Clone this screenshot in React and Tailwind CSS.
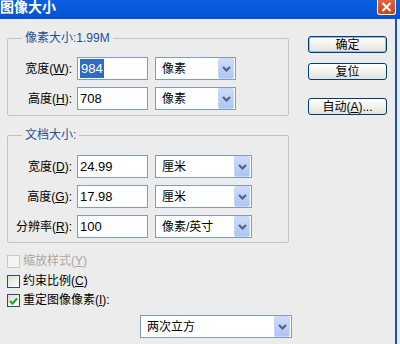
import React from "react";

const FONT = { fontFamily: '"Liberation Sans", "Noto Sans CJK SC", sans-serif' };

function Arrow() {
  return (
    <div className="w-[16px] h-[21px] mr-[1px] rounded-[2px] border border-[#c9d7f7] bg-gradient-to-b from-[#cfdcfb] to-[#aec4f4] flex items-center justify-center">
      <svg width="9" height="6" viewBox="0 0 9 6">
        <path d="M1 1 L4.5 4.5 L8 1" fill="none" stroke="#4d6185" strokeWidth="2" />
      </svg>
    </div>
  );
}

function Select({ w, text }) {
  return (
    <div className={`${w} h-[23px] border border-[#7f9db9] bg-white flex items-center justify-between`}>
      <span className="pl-[6px] text-[12px] text-black">{text}</span>
      <Arrow />
    </div>
  );
}

function Input({ children }) {
  return (
    <div className="w-[71px] h-[23px] border border-[#7f9db9] bg-white flex items-center pl-[2px] text-[13px] text-black">
      {children}
    </div>
  );
}

function Row({ label, value, unit, selW, className = "" }) {
  return (
    <div className={`flex items-center ${className}`}>
      <div className="w-[64px] text-right text-[12px] text-black whitespace-nowrap">{label}</div>
      <div className="ml-[5px]">
        <Input>{value}</Input>
      </div>
      <div className="ml-[7px]">
        <Select w={selW} text={unit} />
      </div>
    </div>
  );
}

function Btn({ children, def, className = "" }) {
  return (
    <div
      className={`w-[79px] h-[17px] rounded-[3px] border border-[#003c74] bg-gradient-to-b from-white to-[#e3e3dc] flex items-center justify-center text-[12px] leading-[14px] text-black ${def ? "shadow-[inset_0_0_0_1px_#9fb7e6]" : ""} ${className}`}
    >
      {children}
    </div>
  );
}

function Check({ checked, disabled, children, className = "" }) {
  return (
    <div className={`flex items-center h-[13px] ${className}`}>
      <div
        className={`w-[13px] h-[13px] border ${disabled ? "border-[#cac8bb] bg-[#f4f4f0]" : "border-[#1c5180] bg-gradient-to-br from-[#dcdcd6] to-white"} flex items-center justify-center`}
      >
        {checked && (
          <svg width="9" height="8" viewBox="0 0 9 8">
            <path d="M1 4 L3.5 6.5 L8 1.5" fill="none" stroke="#21a121" strokeWidth="2" />
          </svg>
        )}
      </div>
      <span className={`ml-[3px] text-[12px] leading-[13px] ${disabled ? "text-[#aca899]" : "text-black"}`}>{children}</span>
    </div>
  );
}

export default function App() {
  return (
    <div className="w-[400px] h-[344px] bg-[#ececec] overflow-hidden flex flex-col" style={FONT}>
      <div className="h-[19px] bg-gradient-to-b from-[#0a5fe0] to-[#0552d4] flex items-start justify-between">
        <span className="text-white font-bold text-[14px] leading-[15px]">图像大小</span>
        <div className="mr-[4px] w-[19px] h-[15px] rounded-b-[3px] border border-t-0 border-white bg-gradient-to-b from-[#e0643c] to-[#c8441a] flex items-center justify-center">
          <svg width="11" height="10" viewBox="0 0 11 10">
            <path d="M1.5 1 L9.5 9 M9.5 1 L1.5 9" stroke="white" strokeWidth="2" />
          </svg>
        </div>
      </div>
      <div className="flex-1 flex">
        <div className="w-[395px] flex">
          <div className="pl-[7px] w-[300px] flex flex-col">
            <fieldset className="mt-[12px] w-[282px] border border-[#c3c3c3] rounded-[2px] px-0 pb-[5px]">
              <legend className="ml-[14px] px-[3px] text-[12px] leading-[14px] text-[#1f4f9a]">像素大小:1.99M</legend>
              <Row className="mt-[12px]" label={<>宽度(<u>W</u>):</>} value={<span className="bg-[#316ac5] text-white px-[1px]">984</span>} unit="像素" selW="w-[81px]" />
              <Row className="mt-[7px]" label={<>高度(<u>H</u>):</>} value="708" unit="像素" selW="w-[81px]" />
            </fieldset>
            <fieldset className="mt-[12px] w-[282px] border border-[#c3c3c3] rounded-[2px] px-0 pb-[4px]">
              <legend className="ml-[14px] px-[3px] text-[12px] leading-[14px] text-[#1f4f9a]">文档大小:</legend>
              <Row className="mt-[13px]" label={<>宽度(<u>D</u>):</>} value="24.99" unit="厘米" selW="w-[97px]" />
              <Row className="mt-[7px]" label={<>高度(<u>G</u>):</>} value="17.98" unit="厘米" selW="w-[97px]" />
              <Row className="mt-[7px]" label={<>分辨率(<u>R</u>):</>} value="100" unit="像素/英寸" selW="w-[97px]" />
            </fieldset>
            <Check disabled className="mt-[12px]">缩放样式(<u>Y</u>)</Check>
            <Check className="mt-[7px]">约束比例(<u>C</u>)</Check>
            <Check checked className="mt-[6px]">重定图像像素(<u>I</u>):</Check>
            <div className="mt-[8px] ml-[133px]">
              <Select w="w-[152px]" text="两次立方" />
            </div>
          </div>
          <div className="ml-[8px] flex flex-col">
            <Btn def className="mt-[17px]">确定</Btn>
            <Btn className="mt-[10px]">复位</Btn>
            <Btn className="mt-[18px]">自动(<u>A</u>)...</Btn>
          </div>
        </div>
        <div className="w-[2px] bg-[#1a4ed0]" />
      </div>
    </div>
  );
}
